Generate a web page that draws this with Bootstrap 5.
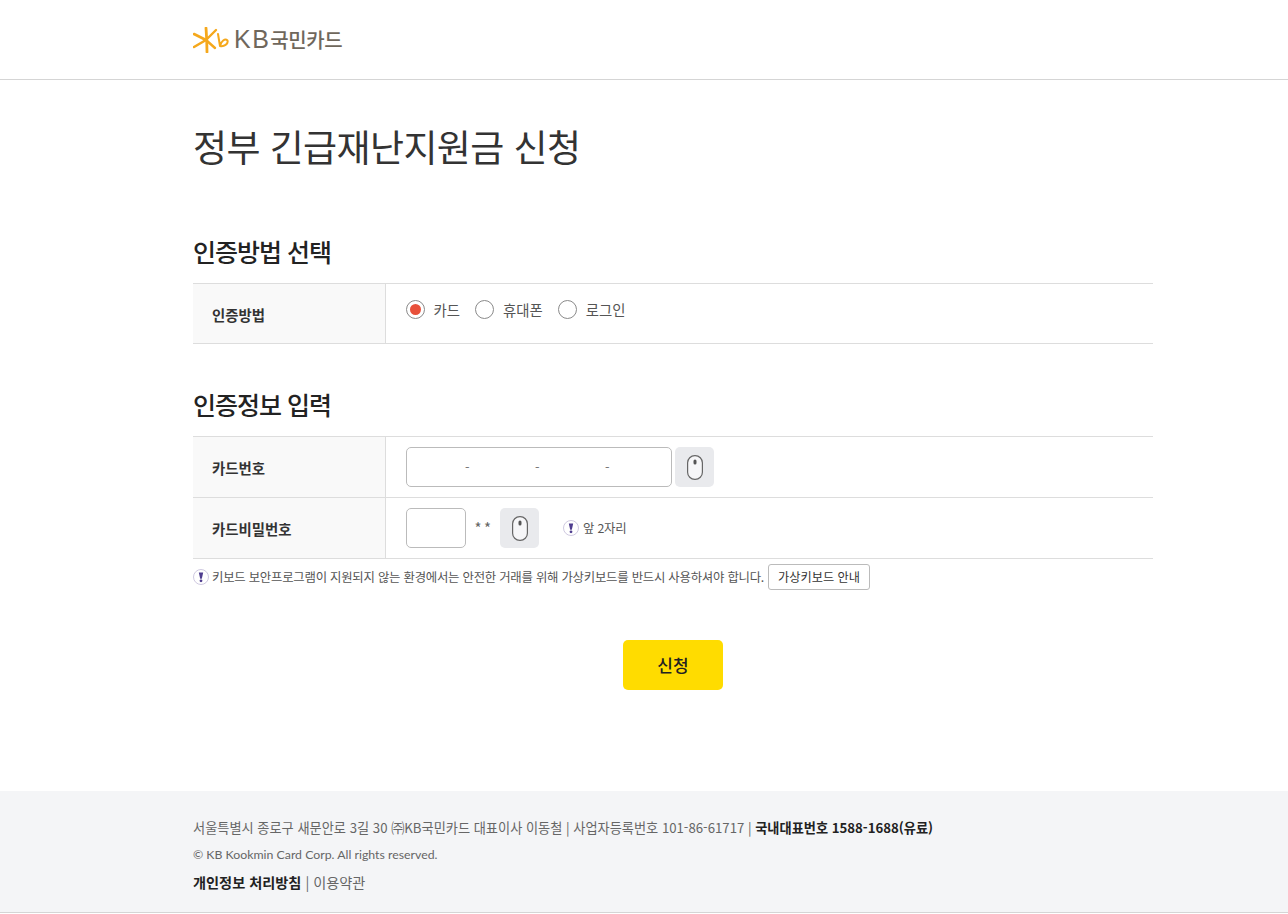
<!DOCTYPE html>
<html lang="ko">
<head>
    <title>정부 긴급재난지원금 신청</title>
    <meta charset="UTF-8">
    <meta name="viewport" content="width=device-width, initial-scale=1.0">
    <link href="https://cdn.jsdelivr.net/npm/bootstrap@5.3.0/dist/css/bootstrap.min.css" rel="stylesheet">
    <style>
        body { font-family: "Noto Sans CJK KR", "Liberation Sans", sans-serif; color: #333; background: #fff; }
        .wrap { width: 960px; margin-left: 193px; }
        .top-bar { height: 80px; border-bottom: 1px solid #d5d5d5; }
        .logo-text { font-size: 20px; color: #6f675c; letter-spacing: -.4px; line-height: 24px; font-weight: 500; white-space: nowrap; margin-left: 1px; }
        .logo-text b { font-family: "Liberation Sans", sans-serif; font-weight: 400; font-size: 25px; letter-spacing: 1.5px; }
        .page-title { font-size: 37px; font-weight: 400; line-height: 50px; letter-spacing: -.6px; margin: 41px 0 0; color: #333; }
        .sec-title { font-size: 25px; font-weight: 500; line-height: 36px; letter-spacing: -1px; margin: 0; color: #222; }
        .first-sec { margin-top: 62px; }
        .next-sec { margin-top: 42px; }
        .form-tbl { border-top: 1px solid #ddd; margin-top: 14px; }
        .form-row { display: flex; border-bottom: 1px solid #ddd; height: 61px; }
        .form-row.one { height: 60px; }
        .form-head { width: 193px; background: #f9f9f9; border-right: 1px solid #ddd; padding: 2px 0 0 19px; font-size: 14.4px; font-weight: 700; color: #333; flex-shrink: 0; }
        .form-cell { padding-left: 20px; font-size: 14px; color: #555; }
        .radio-dot { width: 19px; height: 19px; border: 1px solid #8a8a8a; border-radius: 50%; display: inline-block; position: relative; background: #fff; }
        .radio-dot.on::after { content: ""; position: absolute; left: 3px; top: 3px; width: 11px; height: 11px; border-radius: 50%; background: #e8503a; }
        .radio-label { font-size: 14.4px; color: #555; margin-left: 8.5px; margin-right: 15.5px; line-height: 19px; }
        .fake-input { height: 40px; border: 1px solid #bbb; border-radius: 5px; background: #fff; color: #777; font-size: 13px; }
        .card-no { width: 266px; padding-left: 58px; }
        .card-no span { width: 70px; flex-shrink: 0; }
        .pin-no { width: 60px; }
        .mouse-btn { width: 39px; height: 40px; background: #e9eaed; border-radius: 5px; border: 0; padding: 0; }
        .gap-3px { margin-left: 3px; }
        .stars { font-size: 15px; color: #666; letter-spacing: 2.5px; margin-left: 8.5px; margin-right: 6.5px; }
        .note { font-size: 12.4px; color: #555; letter-spacing: -.24px; }
        .note-row { margin-top: 5px; }
        .note-row .note { margin-left: 3px; }
        .guide-btn { font-size: 12.2px; height: 26px; padding: 0 9px; border: 1px solid #bbb; border-radius: 3px; background: #fff; color: #333; line-height: 23px; }
        .apply-btn { width: 100px; height: 50px; background: #ffdc00; border: 0; border-radius: 5px; font-size: 17px; font-weight: 500; color: #222; margin-top: 50px; margin-left: 430px; display: block; }
        .site-foot { background: #f4f5f7; height: 122px; margin-top: 101px; border-bottom: 1px solid #d5d5d5; padding-top: 27px; font-size: 13.2px; color: #666; }
        .site-foot p { margin: 0; line-height: 20px; }
        .site-foot b { color: #222; font-weight: 700; }
        .copy-line { font-family: Lato, "Liberation Sans", sans-serif; font-size: 12.3px; margin-top: 7px !important; }
        .links-line { font-size: 14.2px; margin-top: 7px !important; }
    </style>
</head>
<body>
    <div class="top-bar d-flex align-items-center">
        <div class="wrap d-flex align-items-center gap-1">
            <svg width="36" height="26" viewBox="0 0 36 26">
                <g fill="none" stroke="#f5a81c" stroke-linecap="round" stroke-linejoin="round">
                    <path d="M13 1 C13.500 8 14 14 14 25" stroke-width="2.800"/>
                    <path d="M1 7 L13 13 L1 20" stroke-width="2.600"/>
                    <path d="M13 13 L23 3" stroke-width="2.400"/>
                    <path d="M13 13 L22 21" stroke-width="2.400"/>
                    <path d="M25 7 L27 19 C31 20 35.500 17 34.500 13.500 C32 11 28 14 27 19" stroke-width="2"/>
                </g>
            </svg>
            <div class="logo-text"><b>KB</b>국민카드</div>
        </div>
    </div>

    <div class="wrap">
        <h1 class="page-title">정부 긴급재난지원금 신청</h1>

        <h2 class="sec-title first-sec">인증방법 선택</h2>
        <div class="form-tbl">
            <div class="form-row one">
                <div class="form-head d-flex align-items-center">인증방법</div>
                <div class="form-cell d-flex align-items-start pt-3">
                    <span class="radio-dot on"></span><span class="radio-label">카드</span>
                    <span class="radio-dot"></span><span class="radio-label">휴대폰</span>
                    <span class="radio-dot"></span><span class="radio-label">로그인</span>
                </div>
            </div>
        </div>

        <h2 class="sec-title next-sec">인증정보 입력</h2>
        <div class="form-tbl">
            <div class="form-row">
                <div class="form-head d-flex align-items-center">카드번호</div>
                <div class="form-cell d-flex align-items-center">
                    <div class="fake-input card-no d-flex align-items-center"><span>-</span><span>-</span><span>-</span></div>
                    <button class="mouse-btn gap-3px d-flex align-items-center justify-content-center" type="button" aria-label="가상키보드">
                        <svg width="16" height="25" viewBox="0 0 16 25"><rect x=".6" y=".6" width="14.800" height="23.800" rx="7.200" fill="#f6f6f8" stroke="#666" stroke-width="1.200"/><rect x="6.500" y="4.500" width="3" height="5" rx="1.500" fill="#555"/></svg>
                    </button>
                </div>
            </div>
            <div class="form-row">
                <div class="form-head d-flex align-items-center">카드비밀번호</div>
                <div class="form-cell d-flex align-items-center">
                    <div class="fake-input pin-no"></div>
                    <span class="stars">**</span>
                    <button class="mouse-btn d-flex align-items-center justify-content-center" type="button" aria-label="가상키보드">
                        <svg width="16" height="25" viewBox="0 0 16 25"><rect x=".6" y=".6" width="14.800" height="23.800" rx="7.200" fill="#f6f6f8" stroke="#666" stroke-width="1.200"/><rect x="6.500" y="4.500" width="3" height="5" rx="1.500" fill="#555"/></svg>
                    </button>
                    <svg class="ms-4" width="16" height="16" viewBox="0 0 16 16"><circle cx="8" cy="8" r="7.500" fill="#fff" stroke="#cfc9e0"/><path d="M5.800 3.500h4.400L8.800 9.800H7.200z" fill="#4f3d8f"/><circle cx="8" cy="11.800" r="1.400" fill="#4f3d8f"/></svg>
                    <span class="note ms-1">앞 2자리</span>
                </div>
            </div>
        </div>
        <div class="note-row d-flex align-items-center">
            <svg width="16" height="16" viewBox="0 0 16 16"><circle cx="8" cy="8" r="7.500" fill="#fff" stroke="#cfc9e0"/><path d="M5.800 3.500h4.400L8.800 9.800H7.200z" fill="#4f3d8f"/><circle cx="8" cy="11.800" r="1.400" fill="#4f3d8f"/></svg>
            <span class="note">키보드 보안프로그램이 지원되지 않는 환경에서는 안전한 거래를 위해 가상키보드를 반드시 사용하셔야 합니다.</span>
            <button class="guide-btn ms-1" type="button">가상키보드 안내</button>
        </div>

        <button class="apply-btn" type="button">신청</button>
    </div>

    <footer class="site-foot">
        <div class="wrap">
            <p>서울특별시 종로구 새문안로 3길 30 ㈜KB국민카드 대표이사 이동철 | 사업자등록번호 101-86-61717 | <b>국내대표번호 1588-1688(유료)</b></p>
            <p class="copy-line">© KB Kookmin Card Corp. All rights reserved.</p>
            <p class="links-line"><b>개인정보 처리방침</b> | 이용약관</p>
        </div>
    </footer>
    <script src="https://cdn.jsdelivr.net/npm/bootstrap@5.3.0/dist/js/bootstrap.bundle.min.js"></script>
</body>
</html>
